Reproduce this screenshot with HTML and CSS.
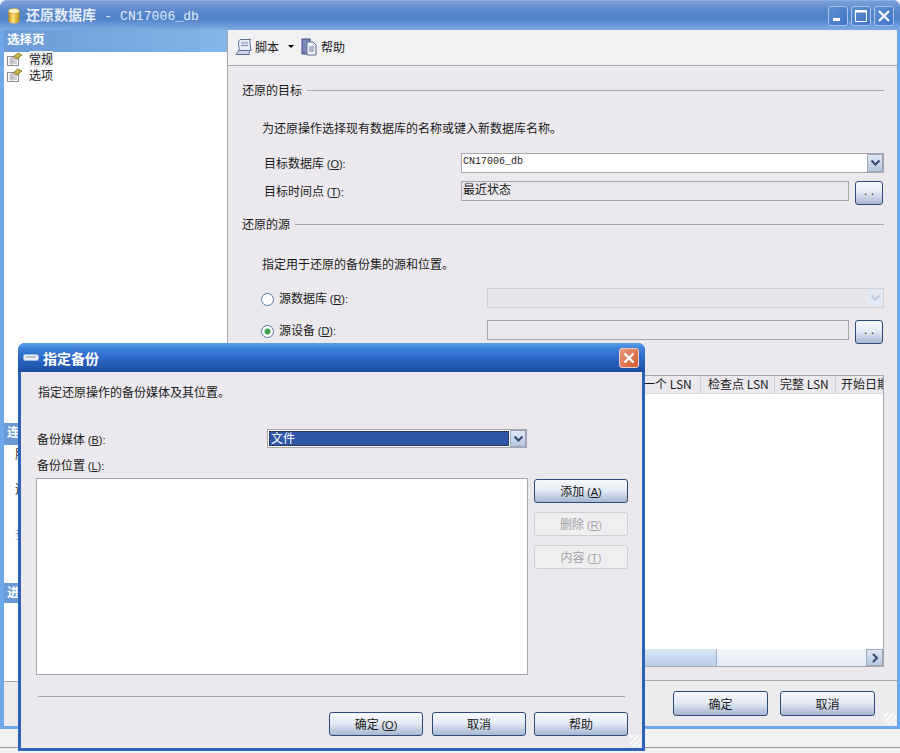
FILE: index.html
```html
<!DOCTYPE html>
<html lang="zh">
<head>
<meta charset="utf-8">
<title>还原数据库</title>
<link rel="stylesheet" href="styles.css">
</head>
<body>
<div class="window main">
  <div class="titlebar inactive">
    <svg class="title-icon" width="12" height="16" viewBox="0 0 12 16"><defs><linearGradient id="db" x1="0" x2="1" y1="0" y2="0"><stop offset="0" stop-color="#c98a10"/><stop offset=".4" stop-color="#ffe27a"/><stop offset="1" stop-color="#c58a12"/></linearGradient></defs><path d="M.5 3v10c0 1.300 2.300 2.500 5.500 2.500s5.500-1.200 5.500-2.500V3z" fill="url(#db)"/><ellipse cx="6" cy="3" rx="5.500" ry="2.500" fill="#fff6c4" stroke="#c9a040" stroke-width=".6"/></svg>
    <span class="title-text">还原数据库 <span class="mono">- CN17006_db</span></span>
    <div class="win-buttons">
      <span class="win-btn"><svg width="20" height="20" viewBox="0 0 20 20"><rect x="5" y="12" width="7" height="3" fill="#fff"/></svg></span>
      <span class="win-btn"><svg width="20" height="20" viewBox="0 0 20 20"><path d="M4.500 4.500h11v11h-11z" fill="none" stroke="#fff"/><rect x="4" y="4" width="12" height="2.500" fill="#fff"/></svg></span>
      <span class="win-btn"><svg width="20" height="20" viewBox="0 0 20 20"><path d="M5 5l10 10M15 5L5 15" stroke="#fff" stroke-width="2.200"/></svg></span>
    </div>
  </div>
  <div class="client">
    <aside class="side">
      <div class="side-head">选择页</div>
      <div class="side-list">
        <div class="side-item"><svg class="page-icon" width="17" height="16" viewBox="0 0 17 16"><use href="#pg"/></svg><span class="side-sel">常规</span></div>
        <div class="side-item"><svg class="page-icon" width="17" height="16" viewBox="0 0 17 16"><defs><g id="pg"><rect x="1.500" y="5.500" width="11" height="9" fill="#fdfdfd" stroke="#8a8a8a"/><path d="M3 8h8M3 10h8M3 12h8M6 6v8" stroke="#a8a8b0"/><path d="M7 6l5-4 4 2-5 4z" fill="#c9b040" stroke="#6f6a20" stroke-width=".7"/></g></defs><use href="#pg"/></svg><span>选项</span></div>
      </div>
      <div class="side-head conn">连接</div>
      <div class="side-info">
        <div>服务器:</div>
        <div class="gap">连接:</div>
        <div class="gap2">查看</div>
      </div>
      <div class="side-head prog">进度</div>
      <div class="side-white"></div>
      <div class="side-foot"></div>
    </aside>
    <section class="pane">
      <div class="toolbar">
        <svg width="18" height="18" viewBox="0 0 18 18"><path d="M5 1.500h11c-1.500 1-1.500 2.500-1 4l1 7H3.500c1.500-1.500 .5-3 .2-5C3.500 5.500 3 3 5 1.500z" fill="#e6ebf6" stroke="#5d6c93"/><path d="M1 16.500c1-2.500 2.500-3.500 4-4h10c-1 1-1 3-.5 4z" fill="#cdd6ea" stroke="#5d6c93"/><path d="M6 5h7M6 7.500h7" stroke="#7a88ad"/></svg>
        <span class="tool-label">脚本</span>
        <svg class="caret" width="6" height="3" viewBox="0 0 6 3"><path d="M0 0h6L3 3z" fill="#000"/></svg>
        <svg width="16" height="18" viewBox="0 0 16 18"><rect x="1" y="1" width="8" height="15" fill="#7b86b8" stroke="#3f4d83"/><path d="M6 4h6l3 3v10H6z" fill="#f3f4f8" stroke="#5d6c93"/><path d="M8 9h5M8 11h5M8 13h5" stroke="#6d7aa0"/></svg>
        <span class="tool-label help">帮助</span>
      </div>
      <div class="form">
        <div class="group first"><span>还原的目标</span><i></i></div>
        <p class="hint one">为还原操作选择现有数据库的名称或键入新数据库名称。</p>
        <div class="row r1">
          <label class="label">目标数据库 <span class="key">(<u>O</u>):</span></label>
          <div class="combo"><span class="mono-val">CN17006_db</span><span class="arrow"><svg width="11" height="8" viewBox="0 0 11 8"><path d="M1.500 1.500l4 4 4-4" fill="none" stroke="#34496f" stroke-width="2"/></svg></span></div>
        </div>
        <div class="row r2">
          <label class="label">目标时间点 <span class="key">(<u>T</u>):</span></label>
          <div class="field ro">最近状态</div>
          <button class="btn dots">..</button>
        </div>
        <div class="group second"><span>还原的源</span><i></i></div>
        <p class="hint two">指定用于还原的备份集的源和位置。</p>
        <div class="row r3">
          <span class="radio"></span>
          <label class="label short">源数据库 <span class="key">(<u>R</u>):</span></label>
          <div class="combo disabled"><span></span><span class="arrow"><svg width="11" height="8" viewBox="0 0 11 8"><path d="M1.500 1.500l4 4 4-4" fill="none" stroke="#bfc9da" stroke-width="2"/></svg></span></div>
        </div>
        <div class="row r4">
          <span class="radio on"></span>
          <label class="label short">源设备 <span class="key">(<u>D</u>):</span></label>
          <div class="field ro"></div>
          <button class="btn dots">..</button>
        </div>
        <div class="table">
          <div class="thead">
            <span class="th spacer"></span>
            <span class="th c1">最后一个 LSN</span>
            <span class="th c2">检查点 LSN</span>
            <span class="th c3">完整 LSN</span>
            <span class="th c4">开始日期</span>
          </div>
          <div class="tbody"></div>
          <div class="hscroll">
            <span class="thumb"></span>
            <span class="track"></span>
            <span class="sbtn"><svg width="8" height="10" viewBox="0 0 8 10"><path d="M2 1l4 4-4 4" fill="none" stroke="#34496f" stroke-width="2"/></svg></span>
          </div>
        </div>
      </div>
      <div class="footer">
        <button class="btn wide">确定</button>
        <button class="btn wide">取消</button>
        <span class="grip"></span>
      </div>
    </section>
  </div>
</div>
<div class="statusline"></div>

<div class="window dialog">
  <div class="titlebar active">
    <svg class="dlg-icon" width="16" height="8" viewBox="0 0 16 8"><rect x=".5" y=".5" width="15" height="6" rx="2" fill="#e9edf5" stroke="#9db6de"/><path d="M3 3h10" stroke="#8a97ad"/></svg>
    <span class="title-text small">指定备份</span>
    <span class="close"><svg width="20" height="20" viewBox="0 0 20 20"><path d="M5.500 5.500l9 9M14.500 5.500l-9 9" stroke="#fff" stroke-width="2.400"/></svg></span>
  </div>
  <div class="dlg-body">
    <p class="dlg-hint">指定还原操作的备份媒体及其位置。</p>
    <div class="dlg-row">
      <label class="dlg-label">备份媒体 <span class="key">(<u>B</u>):</span></label>
      <div class="select"><span class="sel-val">文件</span><span class="arrow"><svg width="11" height="8" viewBox="0 0 11 8"><path d="M1.500 1.500l4 4 4-4" fill="none" stroke="#34496f" stroke-width="2"/></svg></span></div>
    </div>
    <label class="dlg-label loc">备份位置 <span class="key">(<u>L</u>):</span></label>
    <div class="dlg-main">
      <div class="listbox"></div>
      <div class="side-btns">
        <button class="btn act">添加 <span class="key">(<u>A</u>)</span></button>
        <button class="btn act off">删除 <span class="key">(<u>R</u>)</span></button>
        <button class="btn act off">内容 <span class="key">(<u>T</u>)</span></button>
      </div>
    </div>
    <div class="dlg-sep"></div>
    <div class="dlg-foot">
      <button class="btn act">确定 <span class="key">(<u>O</u>)</span></button>
      <button class="btn act">取消</button>
      <button class="btn act">帮助</button>
    </div>
    <span class="grip"></span>
  </div>
</div>
</body>
</html>
```
FILE: styles.css
```css
* { box-sizing: border-box; }
html, body { margin: 0; padding: 0; }
body {
  position: relative;
  width: 900px;
  height: 753px;
  overflow: hidden;
  background: #f1f0f2;
  font: 12px/16px "Noto Sans CJK SC", "Liberation Sans", sans-serif;
  color: #1a1a1a;
}
p { margin: 0; }
u { text-decoration: underline; }
.key { font-family: "Liberation Sans", sans-serif; font-size: 11px; }
.window { display: flex; flex-direction: column; }
.main {
  width: 900px;
  height: 729px;
  border-radius: 7px 7px 0 0;
  background: #6fa8ea;
  padding: 0 3px 3px 4px;
}
.statusline {
  position: absolute;
  left: 0; right: 0; top: 747px;
  border-top: 1px solid #9b9b9b;
}
.titlebar { display: flex; align-items: center; flex: none; }
.inactive {
  height: 30px;
  margin: 0 -3px 0 -4px;
  padding: 0 6px 0 8px;
  border-radius: 7px 7px 0 0;
  border-top: 1px solid #8fb2e6;
  background: linear-gradient(#7b9fd8, #5a88cc 35%, #4f82c8 60%, #7fabe6);
}
.title-icon { flex: none; margin-right: 6px; }
.title-text {
  font-size: 14px;
  font-weight: 700;
  color: #e4ecfa;
  letter-spacing: 0;
}
.mono { font-family: "Liberation Mono", monospace; font-size: 13px; font-weight: 400; letter-spacing: .1px; margin-left: 5px; }
.win-buttons { display: flex; gap: 3px; margin-left: auto; }
.win-btn {
  width: 20px; height: 20px;
  border: 1px solid #a8c4ee;
  border-radius: 3px;
  background: linear-gradient(135deg, #5f8ed2, #3f74c4);
  display: flex; align-items: center; justify-content: center;
}
.win-btn svg { flex: none; }
.client { flex: 1; min-height: 0; display: flex; }
.side {
  width: 224px;
  flex: none;
  display: flex;
  flex-direction: column;
  background: #fff;
  border-right: 1px solid #a8a6aa;
  position: relative;
}
.side-head {
  height: 22px;
  flex: none;
  padding: 1px 0 0 3px;
  background: linear-gradient(90deg, #6b9bd6, #84b6ea);
  color: #fff;
  font-weight: 700;
  font-size: 12.500px;
}
.side-list { height: 371px; flex: none; }
.side-item { display: flex; align-items: center; height: 16px; margin-top: -1px; padding-left: 2px; gap: 6px; }
.side-item + .side-item { margin-top: 0; }
.page-icon { flex: none; }
.side-sel { background: #eeeeee; }
.side-head.conn { background: #6b9bd6; height: 22px; }
.side-info { height: 138px; flex: none; padding: 1px 0 0 11px; }
.side-info .gap { margin-top: 19px; }
.side-info .gap2 { margin-top: 29px; color: #8fa0c0; }
.prog { background: #6b9bd6; height: 20px; }
.side-white { height: 78px; flex: none; }
.side-foot { flex: 1; background: #ecebee; border-top: 1px solid #a8a6aa; }
.pane {
  flex: 1;
  min-width: 0;
  display: flex;
  flex-direction: column;
  background: #ebe9ed;
}
.toolbar {
  height: 36px;
  flex: none;
  display: flex;
  align-items: center;
  padding: 0 0 2px 7px;
  background: #f1f0f2;
  border-bottom: 1px solid #a8a6aa;
}
.tool-label { margin: 0 9px 0 2px; }
.tool-label.help { margin-left: 4px; }
.caret { margin: 0 7px 0 0; }
.form { flex: 1; min-height: 0; padding: 16px 13px 13px 14px; display: flex; flex-direction: column; }
.group { display: flex; align-items: center; height: 16px; flex: none; }
.group i { flex: 1; border-top: 1px solid #a8a6aa; margin-left: 5px; }
.second { margin-top: 15px; }
.hint { height: 16px; padding-left: 20px; flex: none; }
.hint.one { margin-top: 22px; }
.hint.two { margin-top: 24px; }
.row { display: flex; align-items: flex-start; height: 20px; flex: none; }
.r1 { margin-top: 17px; padding-left: 22px; }
.r2 { margin-top: 8px; padding-left: 22px; }
.r3 { margin-top: 16px; padding-left: 19px; }
.r4 { margin-top: 12px; padding-left: 19px; }
.label { width: 197px; flex: none; line-height: 20px; }
.label.short { width: 208px; margin-left: 5px; }
.combo, .field {
  flex: 1;
  height: 20px;
  border: 1px solid #a8a6aa;
  min-width: 0;
}
.combo { display: flex; justify-content: space-between; background: #fff; }
.mono-val { font: 10px/16px "Liberation Mono", monospace; padding-left: 1px; }
.arrow {
  width: 16px;
  flex: none;
  display: flex; align-items: center; justify-content: center;
  background: linear-gradient(#dfe8f6, #b6c6de);
  border: 1px solid #9ba8bc;
}
.combo.disabled { background: #e8e6ea; border-color: #d2d0d4; }
.combo.disabled .arrow { background: #e3e9f4; border-color: #e3e9f4; }
.field.ro { background: #ebe9ed; padding: 0 0 0 1px; line-height: 14px; }
.btn {
  font: inherit;
  color: #1a1a1a;
  padding: 0;
  border: 1px solid #2e4a78;
  border-radius: 3px;
  background: linear-gradient(#f6f8fc, #e6ecf5 45%, #a8b6d2);
}
.dots {
  flex: none;
  width: 28px;
  height: 24px;
  margin: 0 1px 0 6px;
  padding-bottom: 6px;
  letter-spacing: 4px;
  text-indent: 4px;
  font-size: 11px;
}
.radio {
  width: 13px; height: 13px;
  flex: none;
  margin-top: 5px;
  border: 1px solid #5a7aa8;
  border-radius: 50%;
  background: #fff;
}
.radio.on { background: radial-gradient(circle, #3aa04a 0 2.500px, #fff 3.500px); }
.table {
  margin-top: 35px;
  flex: 1;
  min-height: 0;
  display: flex;
  flex-direction: column;
  background: #fff;
  border: 1px solid #a8a6aa;
}
.thead { display: flex; height: 18px; flex: none; background: #ebe9ed; border-bottom: 1px solid #dcdbe0; overflow: hidden; }
.th { flex: none; padding-left: 5px; line-height: 16px; border-right: 1px solid #d0cfd3; white-space: nowrap; overflow: hidden; }
.spacer { width: 371px; border: 0; }
.c1 { width: 87px; }
.c2 { width: 74px; padding-left: 7px; }
.c3 { width: 61px; }
.c4 { flex: 1; border-right: 0; }
.tbody { flex: 1; }
.hscroll { height: 17px; flex: none; display: flex; background: #f2f5fb; }
.thumb { width: 474px; background: linear-gradient(#dbe6f6, #b6cdea); border-right: 1px solid #9fb2cc; }
.track { flex: 1; background: linear-gradient(#f2f5fb, #e4ecf7); }
.sbtn {
  width: 17px;
  display: flex; align-items: center; justify-content: center;
  background: linear-gradient(#dfe8f6, #b6c6de);
  border: 1px solid #9ba8bc;
}
.footer {
  height: 46px;
  flex: none;
  position: relative;
  display: flex;
  justify-content: flex-end;
  gap: 12px;
  padding: 10px 22px 0 0;
  border-top: 1px solid #a8a6aa;
  background: #ecebee;
}
.wide { width: 95px; height: 25px; }
.grip {
  position: absolute;
  right: 1px; bottom: 1px;
  width: 12px; height: 12px;
  background: repeating-linear-gradient(135deg, transparent 0 2px, #fff 2px 4px);
  opacity: .7;
}
.dialog {
  position: absolute;
  left: 18px; top: 343px;
  width: 627px;
  height: 408px;
  border-radius: 7px 7px 0 0;
  background: #2e62b8;
  padding: 0 3px 3px 3px;
}
.active {
  height: 29px;
  margin: 0 -3px;
  padding: 0 6px 0 5px;
  border-radius: 7px 7px 0 0;
  background: linear-gradient(#5aa0ea, #3a7ed8 20%, #2a66c4 55%, #1c4ea4);
}
.dlg-icon { flex: none; margin-right: 4px; }
.title-text.small { color: #fff; }
.close {
  margin-left: auto;
  width: 20px; height: 20px;
  border: 1px solid #f0d0c8;
  border-radius: 3px;
  background: linear-gradient(135deg, #e89a7c, #d45a32);
  display: flex; align-items: center; justify-content: center;
}
.close svg { flex: none; }
.dlg-body {
  flex: 1;
  min-height: 0;
  position: relative;
  background: #ebe9ed;
  padding: 12px 13px 0 15px;
  display: flex;
  flex-direction: column;
}
.dlg-hint { height: 16px; padding-left: 2px; flex: none; }
.dlg-row { display: flex; height: 19px; margin-top: 29px; flex: none; }
.dlg-label { display: block; width: 231px; flex: none; padding-left: 1px; line-height: 19px; }
.select { display: flex; width: 260px; height: 19px; flex: none; border: 1px solid #a8a6aa; background: #fff; }
.sel-val { flex: 1; margin: 1px; background: #2f56a6; color: #fff; outline: 1px dotted #222; outline-offset: -1px; padding-left: 2px; line-height: 14px; }
.loc { margin-top: 9px; width: auto; height: 16px; line-height: 16px; flex: none; }
.dlg-main { display: flex; margin-top: 5px; height: 197px; flex: none; }
.listbox { width: 492px; background: #fff; border: 1px solid #a8a6aa; flex: none; }
.side-btns { display: flex; flex-direction: column; gap: 9px; margin-left: 6px; padding-top: 1px; }
.act { width: 94px; height: 24px; flex: none; }
.off { color: #a3a2a6; background: #efeef1; border-color: #cfced2; }
.dlg-sep { margin: 21px 4px 0 2px; border-top: 1px solid #a8a6aa; flex: none; }
.dlg-foot { display: flex; justify-content: flex-end; gap: 8px; margin: 15px 1px 0 0; flex: none; }
.dlg-foot .act:first-child { margin-right: 1px; }
```
